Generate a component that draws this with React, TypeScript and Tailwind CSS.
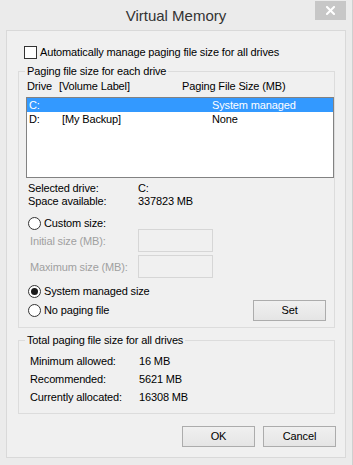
import React from "react";

function Radio({ checked }: { checked?: boolean }) {
  return (
    <span className="w-[13px] h-[13px] rounded-full border border-[#333] bg-white flex items-center justify-center shrink-0">
      {checked && <span className="w-[7px] h-[7px] rounded-full bg-[#1a1a1a]" />}
    </span>
  );
}

function Button({ label, className = "" }: { label: string; className?: string }) {
  return (
    <div
      className={`w-[73px] h-[21px] border border-[#acacac] bg-gradient-to-b from-[#f0f0f0] to-[#e5e5e5] flex items-center justify-center text-black leading-[13px] ${className}`}
    >
      {label}
    </div>
  );
}

function GroupBox({
  label,
  className = "",
  children,
}: {
  label: string;
  className?: string;
  children: React.ReactNode;
}) {
  return (
    <div className={`relative border border-[#dcdcdc] flex flex-col ${className}`}>
      <span className="absolute left-[6px] top-[-7px] px-[2px] bg-[#f0f0f0] leading-[13px] text-black">
        {label}
      </span>
      {children}
    </div>
  );
}

export default function App() {
  return (
    <div className="w-[353px] h-[465px] bg-[#ebebeb] border-r border-[#cfcfcf] flex flex-col font-['Liberation_Sans',Arial,sans-serif] text-[11px] tracking-[-0.14px] text-black select-none">
      {/* Title bar */}
      <div className="relative h-[30px] flex items-center justify-center">
        <span className="text-[15px] tracking-normal text-[#333] leading-[18px] mt-[1px]">Virtual Memory</span>
        <div className="absolute top-[1px] right-[6px] w-[31px] h-[19px] bg-[#c7c7c7] flex items-center justify-center">
          <svg width="9" height="9" viewBox="0 0 9 9">
            <path d="M1 1 L8 8 M8 1 L1 8" stroke="#fff" strokeWidth="2" strokeLinecap="square" />
          </svg>
        </div>
      </div>

      {/* Client area */}
      <div className="ml-[6px] w-[340px] h-[428px] border border-[#d9d9d9] bg-[#f0f0f0] flex flex-col pl-[11px] pr-[10px]">
        {/* Auto manage checkbox */}
        <div className="mt-[15px] h-[13px] ml-[6px] flex items-center">
          <span className="w-[13px] h-[13px] border border-[#333] bg-white shrink-0" />
          <span className="ml-[3px] leading-[13px]">Automatically manage paging file size for all drives</span>
        </div>

        {/* Paging file size for each drive */}
        <GroupBox label="Paging file size for each drive" className="mt-[12px] h-[257px]">
          <div className="mt-[8px] h-[13px] leading-[13px] flex pl-[8px]">
            <span className="w-[32px]">Drive</span>
            <span className="w-[123px]">[Volume Label]</span>
            <span>Paging File Size (MB)</span>
          </div>

          <div className="mt-[4px] ml-[7px] w-[308px] h-[81px] border border-[#828282] bg-white flex flex-col">
            <div className="h-[14px] leading-[14px] bg-[#3399ff] text-white flex pl-[2px]">
              <span className="w-[33px]">C:</span>
              <span className="w-[150px]"></span>
              <span>System managed</span>
            </div>
            <div className="h-[14px] leading-[14px] flex pl-[2px]">
              <span className="w-[33px]">D:</span>
              <span className="w-[150px]">[My Backup]</span>
              <span>None</span>
            </div>
          </div>

          <div className="mt-[4px] pl-[9px] flex flex-col leading-[13px]">
            <div className="flex h-[13px]">
              <span className="w-[110px]">Selected drive:</span>
              <span>C:</span>
            </div>
            <div className="flex h-[13px]">
              <span className="w-[110px]">Space available:</span>
              <span>337823 MB</span>
            </div>
          </div>

          <div className="mt-[9px] ml-[9px] h-[12px] flex items-center">
            <Radio />
            <span className="ml-[3px] leading-[13px]">Custom size:</span>
          </div>

          <div className="h-[23px] flex items-center">
            <span className="pl-[11px] w-[119px] text-[#a0a0a0] leading-[13px] mt-[2px]">Initial size (MB):</span>
            <span className="w-[75px] h-[23px] border border-[#d6d6d6] bg-[#f0f0f0]" />
          </div>
          <div className="mt-[3px] h-[23px] flex items-center">
            <span className="pl-[11px] w-[119px] text-[#a0a0a0] leading-[13px] mt-[2px]">Maximum size (MB):</span>
            <span className="w-[75px] h-[23px] border border-[#d6d6d6] bg-[#f0f0f0]" />
          </div>

          <div className="mt-[7px] ml-[9px] h-[13px] flex items-center">
            <Radio checked />
            <span className="ml-[3px] leading-[13px]">System managed size</span>
          </div>

          <div className="mt-[2px] h-[21px] flex items-center justify-between pl-[9px] pr-[8px]">
            <div className="flex items-center">
              <Radio />
              <span className="ml-[3px] leading-[13px]">No paging file</span>
            </div>
            <Button label="Set" />
          </div>
        </GroupBox>

        {/* Totals */}
        <GroupBox label="Total paging file size for all drives" className="mt-[12px] h-[74px]">
          <div className="mt-[11px] flex flex-col">
            <div className="h-[18px] leading-[18px] flex pl-[11px]">
              <span className="w-[109px]">Minimum allowed:</span>
              <span>16 MB</span>
            </div>
            <div className="h-[18px] leading-[18px] flex pl-[11px]">
              <span className="w-[109px]">Recommended:</span>
              <span>5621 MB</span>
            </div>
            <div className="h-[18px] leading-[18px] flex pl-[11px]">
              <span className="w-[109px]">Currently allocated:</span>
              <span>16308 MB</span>
            </div>
          </div>
        </GroupBox>

        <div className="mt-[12px] flex justify-end -mr-[1px] gap-[8px]">
          <Button label="OK" />
          <Button label="Cancel" />
        </div>
      </div>
    </div>
  );
}
